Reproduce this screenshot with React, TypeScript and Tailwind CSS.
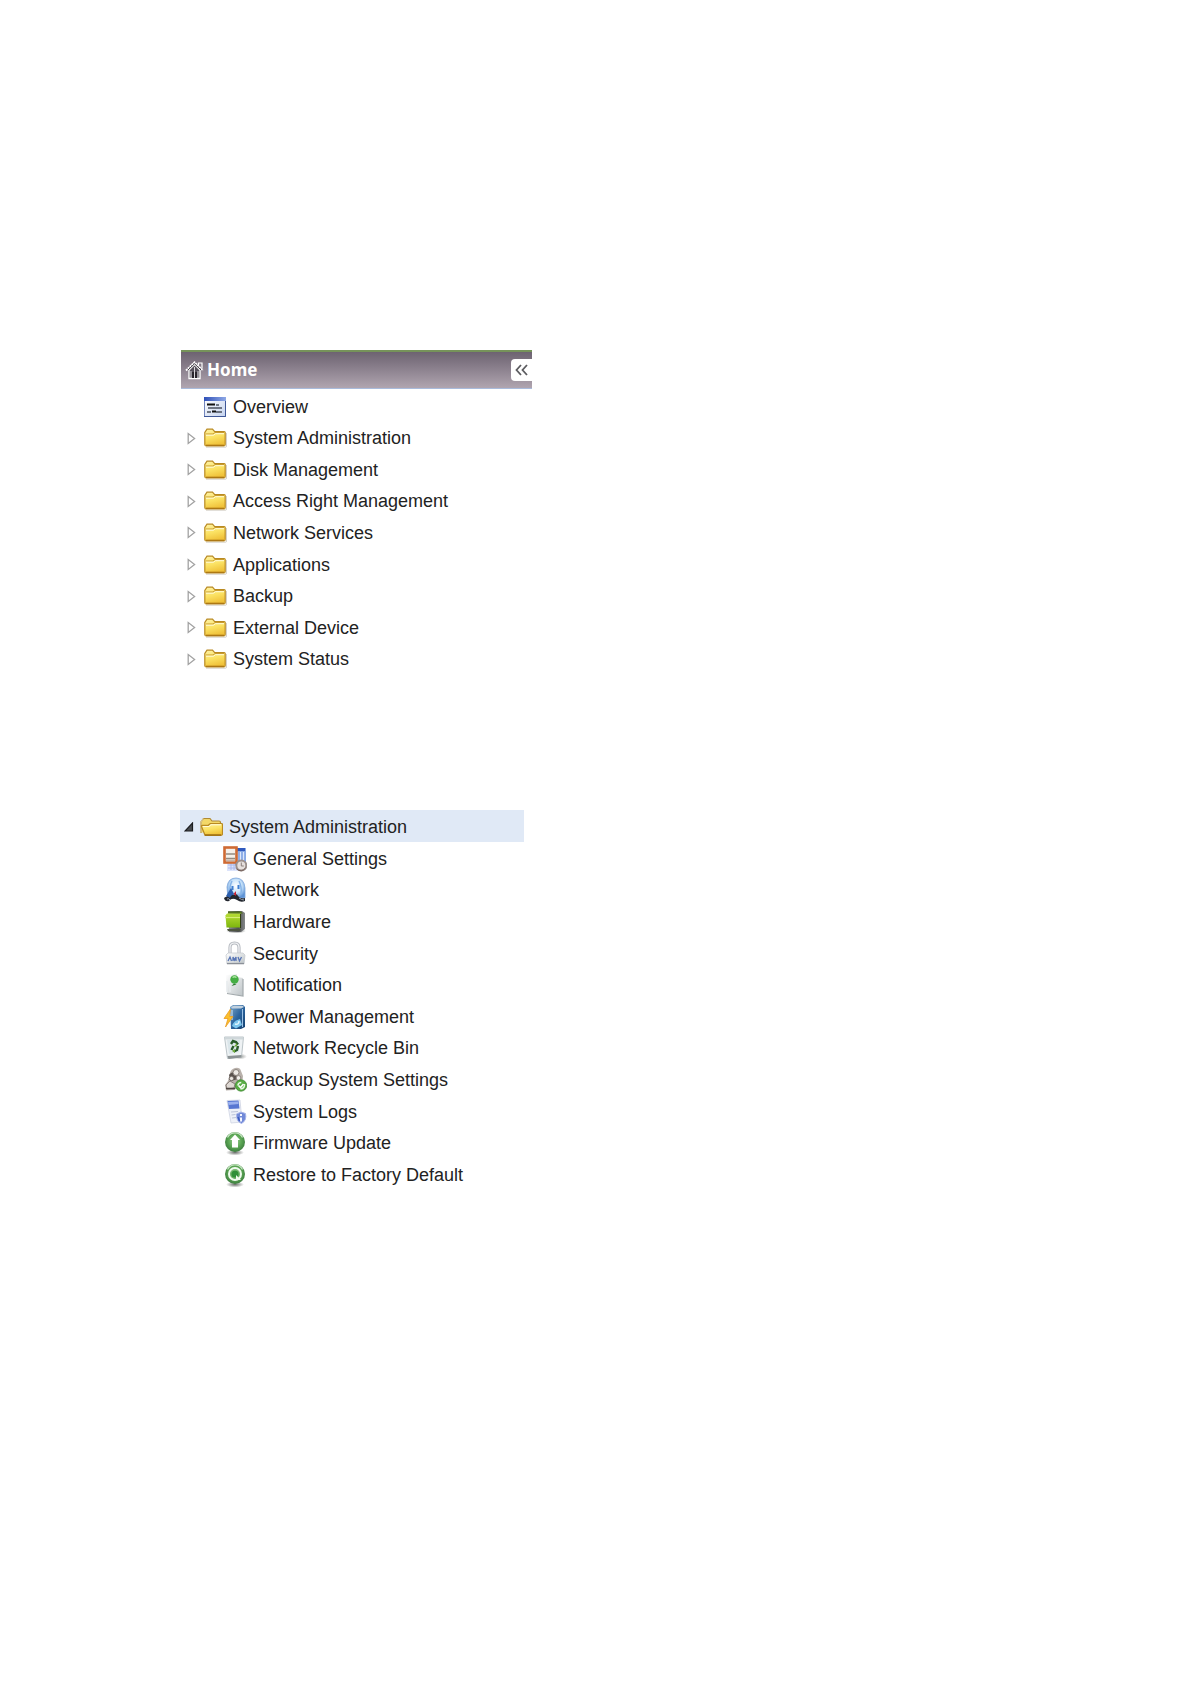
import type { ReactNode } from "react";

function Gradients() {
  return (
    <svg width="0" height="0" className="absolute" aria-hidden="true">
      <defs>
        <linearGradient id="folder" x1="0" y1="0" x2="0.3" y2="1">
          <stop offset="0" stopColor="#fff3a6" />
          <stop offset="0.55" stopColor="#fbe263" />
          <stop offset="1" stopColor="#f0c23a" />
        </linearGradient>
        <linearGradient id="titlebar" x1="0" y1="0" x2="1" y2="0">
          <stop offset="0" stopColor="#2f50b8" />
          <stop offset="1" stopColor="#8fa9e6" />
        </linearGradient>
        <linearGradient id="paper" x1="0" y1="0" x2="1" y2="1">
          <stop offset="0" stopColor="#ffffff" />
          <stop offset="1" stopColor="#bcc3c6" />
        </linearGradient>
        <linearGradient id="sheet" x1="0" y1="0" x2="1" y2="1">
          <stop offset="0" stopColor="#ffffff" />
          <stop offset="1" stopColor="#c5d3ee" />
        </linearGradient>
        <linearGradient id="lime" x1="0" y1="0" x2="0" y2="1">
          <stop offset="0" stopColor="#b7dd35" />
          <stop offset="1" stopColor="#7db50e" />
        </linearGradient>
        <linearGradient id="steel" x1="0" y1="0" x2="1" y2="0">
          <stop offset="0" stopColor="#8e9194" />
          <stop offset="0.6" stopColor="#4d5052" />
          <stop offset="1" stopColor="#85888a" />
        </linearGradient>
        <linearGradient id="tower" x1="0" y1="0" x2="1" y2="1">
          <stop offset="0" stopColor="#7ea6c8" />
          <stop offset="0.5" stopColor="#2c659f" />
          <stop offset="1" stopColor="#14406f" />
        </linearGradient>
        <radialGradient id="globe" cx="0.5" cy="0.4" r="0.6">
          <stop offset="0" stopColor="#ffffff" />
          <stop offset="0.55" stopColor="#c8e3fa" />
          <stop offset="1" stopColor="#5d93d6" />
        </radialGradient>
        <radialGradient id="ball" cx="0.5" cy="0.45" r="0.55">
          <stop offset="0" stopColor="#9fd294" />
          <stop offset="0.6" stopColor="#5aa553" />
          <stop offset="1" stopColor="#3d7d3f" />
        </radialGradient>
        <radialGradient id="shade">
          <stop offset="0" stopColor="#3a3f3a" stopOpacity="0.75" />
          <stop offset="1" stopColor="#3a3f3a" stopOpacity="0" />
        </radialGradient>
      </defs>
    </svg>
  );
}

function HouseIcon() {
  return (
    <svg width="19" height="19" viewBox="0 0 19 19" aria-hidden="true">
      <path d="M4 9v8.5h11V9L9.500 3.500z" fill="#55505a" stroke="#fff" strokeWidth="1.300" />
      <path d="M1 9.500 9.500 1.300 18 9.500" fill="none" stroke="#fff" strokeWidth="1.800" strokeDasharray="2 .6" />
      <path d="M13.500 4V2H17v5.500" fill="none" stroke="#fff" strokeWidth="1.200" />
      <path d="M3 9 9.500 2.800 16 9" fill="none" stroke="#39353d" strokeWidth="1" />
      <path d="M7 17V11h5v6z" fill="#28252b" />
      <path d="M9.500 6v11M6 10v7M13 10v7" stroke="#d8d5da" strokeWidth="1" />
    </svg>
  );
}

function OverviewIcon() {
  return (
    <svg width="22" height="20" viewBox="0 0 22 20" aria-hidden="true">
      <rect x="0.500" y="0.500" width="21" height="19" fill="url(#sheet)" stroke="#7286bd" />
      <rect x="0" y="0" width="22" height="4" fill="url(#titlebar)" />
      <path d="M21.500 4v15.500H0" fill="none" stroke="#3f5797" />
      <path d="M3 7.500h8M8 14.500h4" stroke="#111" strokeWidth="2" />
      <path d="M12 8h3M4 11h5M9 11h9M3 15h4M12 15h6" stroke="#4a505e" strokeWidth="1.300" />
    </svg>
  );
}

function FolderIcon() {
  return (
    <svg width="23" height="20" viewBox="0 0 23 20" aria-hidden="true">
      <path d="M2 19.200h19.500q1 0 1-1V5" fill="none" stroke="#b9b2a4" strokeOpacity="0.6" />
      <path d="M.8 16.500V4.500L3 1.200h5.500l2 2.300h9.700q1 0 1 1v12q0 1.500-1.500 1.500H2.300Q.8 18 .8 16.500z" fill="url(#folder)" stroke="#b98a22" strokeWidth="1.200" />
      <path d="M2 6h7l2-1.500h9" fill="none" stroke="#c99b2d" strokeWidth="1" />
      <path d="M2 7.200h7.500l2-1.500H20" fill="none" stroke="#fffbd8" strokeWidth="1" />
      <path d="M2 17.300h18" stroke="#a97312" strokeWidth="1.200" />
    </svg>
  );
}

function OpenFolderIcon() {
  return (
    <svg width="23" height="20" viewBox="0 0 23 20" aria-hidden="true">
      <path d="M1 16V5l2.500-3.500H10l2 2.500h7q1.500 0 1.500 1.500V9" fill="#f3d868" stroke="#b08a34" strokeWidth="1.200" />
      <path d="M1 15.500V5l2.500-3.500" fill="none" stroke="#dcc98f" strokeWidth="1.200" />
      <path d="M5 18.300 1.500 9.500q-.4-1.200 1-1.200h5.800l2-1.800h11.200q1 0 1 1v9.300q0 1.500-1.500 1.500z" fill="url(#folder)" stroke="#b98a22" strokeWidth="1.200" />
      <path d="M3 9.500h6l2-1.700h10" fill="none" stroke="#fffbd8" strokeWidth="1" />
      <path d="M5 18h16" stroke="#9b6c12" strokeWidth="1.400" />
    </svg>
  );
}

function ClosedArrow() {
  return (
    <svg width="9" height="13" viewBox="0 0 9 13" aria-hidden="true">
      <path d="M1.200 1.500v10L7.600 6.500z" fill="#fff" stroke="#a3a3a3" strokeWidth="1.300" />
    </svg>
  );
}

function OpenArrow() {
  return (
    <svg width="10" height="10" viewBox="0 0 10 10" aria-hidden="true">
      <path d="M8.500 1v8H1z" fill="#4a4c50" stroke="#1b1c1f" strokeWidth="1.200" />
    </svg>
  );
}

function ItemSvg({ children }: { children: ReactNode }) {
  return (
    <svg width="24" height="26" viewBox="0 0 24 26" className="shrink-0" aria-hidden="true">
      {children}
    </svg>
  );
}

const generalIcon = (
  <ItemSvg>
    <path d="M4 17h13v8H4z" fill="#dce4fb" />
    <path d="M5 19h9M5 22h9M8 17v7M11 17v7" stroke="#aab8ec" />
    <rect x="12" y="2" width="11" height="17" fill="#87a9e6" />
    <path d="M13 3.500h9" stroke="#3059bd" strokeWidth="3" />
    <path d="M14.500 6v11M17.500 6v11M20.500 6v11" stroke="#dbe7fb" strokeWidth="1.200" />
    <rect x="1.500" y="1.500" width="12" height="15" fill="#f5f0ea" stroke="#cf6a33" strokeWidth="2.600" />
    <path d="M3 8h9M3 12.500h9" stroke="#948a80" strokeWidth="1.400" />
    <path d="M3 14.500h9" stroke="#c9b5a8" strokeWidth="2" />
    <circle cx="18.300" cy="19.500" r="5" fill="#e6e0dd" stroke="#9a8f8c" strokeWidth="2" />
    <path d="M18.300 16.500v3.500h2.500" fill="none" stroke="#8b7f7c" />
    <path d="M13.500 23q5 4 9-1" fill="none" stroke="#75605a" strokeWidth="1" />
  </ItemSvg>
);

const networkIcon = (
  <ItemSvg>
    <path d="M4 10Q5 1 13 1t9 10v10H5z" fill="url(#globe)" stroke="#7fa7dc" strokeWidth="0.800" />
    <path d="M9 4q-3 6-2 13M16 4q3 6 2 13" stroke="#86b4e8" fill="none" strokeWidth="1.500" />
    <path d="M9.500 9v4M15.500 8v4" stroke="#3f7fd1" strokeWidth="2" />
    <path d="M3 19 8 11l3 6-4 5z" fill="#2c5fae" />
    <path d="M1 21q3-3 6 0 1.500-4 5-3 2-2 3 1 2 3 7 2v3q-4 2-8-1-5-3-8 1-4 1-5-3z" fill="#23272f" />
    <path d="M4 22q2-1 3 1M16 21q3 2 5 2" stroke="#9aa4b1" fill="none" />
    <path d="m10.500 17 2.500-3v5z" fill="#c9202f" />
  </ItemSvg>
);

const hardwareIcon = (
  <ItemSvg>
    <ellipse cx="13" cy="22" rx="10" ry="2.500" fill="url(#shade)" />
    <path d="M5 2h14l3 2v16l-4 3H6z" fill="url(#steel)" />
    <path d="M5 2.500h13l2 2H5z" fill="#54741d" />
    <path d="M2.500 6.500 4 4.500h13.500v14H3.500z" fill="url(#lime)" />
    <path d="M2 8.500h15.500" stroke="#d7ee76" strokeWidth="1.200" />
    <path d="M17.500 5v14" stroke="#314010" />
    <path d="M4 20h14l-1 2H5z" fill="#4d5441" />
  </ItemSvg>
);

const securityIcon = (
  <ItemSvg>
    <path d="M7 15V6.500Q7 2 11.500 2T16 6.500V15" fill="none" stroke="#b6bac0" strokeWidth="3.200" />
    <path d="M7 14V6.500Q7 2 11.500 2T16 6.500V14" fill="none" stroke="#f5f6f8" strokeWidth="1.200" />
    <path d="m3 14 2-2h15l2 2-1 9H4z" fill="url(#paper)" stroke="#c2c6cc" strokeWidth="0.700" />
    <path d="m5 20 2-4 1.500 4M10 20v-4l1.500 3 1.500-3v4M15 16l1.500 4 2-4" fill="none" stroke="#5875b5" strokeWidth="1.300" />
    <path d="M4 22.500h17" stroke="#8b9098" strokeWidth="1.200" />
  </ItemSvg>
);

const notificationIcon = (
  <ItemSvg>
    <path d="m3 3 11-1v3l6 1v18L4 21z" fill="url(#paper)" />
    <path d="M4 21.500 20 24V7" fill="none" stroke="#a2a9ac" strokeWidth="1.200" />
    <path d="M4 9v11M7 13v7" stroke="#e8ecee" strokeWidth="1.500" />
    <circle cx="11.500" cy="7.500" r="4.200" fill="#45ae43" />
    <path d="M11 11.500 8.500 14l5-1.500z" fill="#2d7b32" />
    <path d="M9.500 5.500q2-1.500 4 0" fill="none" stroke="#a9e49f" strokeWidth="1.500" />
  </ItemSvg>
);

const powerIcon = (
  <ItemSvg>
    <path d="m7 3 3-2h10l2 2v20l-4 2H8z" fill="url(#tower)" />
    <path d="m8 3 3-1.300h8.500L21 3l-3 1.500H9z" fill="#c0d0de" />
    <path d="M19.500 5v18" stroke="#9cc2e6" />
    <path d="M9 6v10" stroke="#a8c8e3" strokeWidth="1.500" />
    <path d="M9 22q1-5 8-7l2 6-6 3.500z" fill="#7cc6ed" />
    <path d="M12 20q4 1 4-3" fill="none" stroke="#e2f6ff" strokeWidth="1.500" />
    <path d="M7.500 5 1 14.500h4L2.500 23 10 12.500H6.500z" fill="#fbc02c" stroke="#e99a22" strokeWidth="0.800" />
  </ItemSvg>
);

const recycleIcon = (
  <ItemSvg>
    <ellipse cx="17" cy="21.500" rx="7" ry="3" fill="url(#shade)" opacity="0.7" />
    <path d="M1.500 2h19l-2 20-14 1.500z" fill="#eef2f4" stroke="#bcc5c9" strokeWidth="1" />
    <path d="M1.500 2h19l-.5 2.500H2z" fill="#cfd7da" />
    <path d="M4 5h13l-1 12-10 2z" fill="#dbe6ea" />
    <path d="m4.500 21 14-1v2.500l-13 1.500z" fill="#8b9294" />
    <path d="m8 9 2-3 3 1 2 2.500M15 11l-1 4-3 1.500M8.500 15l2-4" fill="none" stroke="#285b2a" strokeWidth="2.400" />
    <path d="M14 8v3.500h-3zM12 14v4l-3-2z" fill="#6ba936" />
  </ItemSvg>
);

const backupIcon = (
  <ItemSvg>
    <path d="M7 6q1-4 5-5 5-1 6 3l2 5-1 9-8 5-8 .500L2 18l3-4z" fill="#b9b1ab" />
    <path d="M6 8q2-3 6-3l3 7-7 2z" fill="#5a524e" />
    <circle cx="13" cy="5.500" r="3" fill="#eeeae6" stroke="#8b837d" />
    <circle cx="8.500" cy="11.500" r="2.200" fill="#e9e4df" stroke="#6f6762" />
    <circle cx="15.500" cy="11" r="2.400" fill="#f3f0ed" stroke="#8b837d" />
    <path d="m3 18 4-4 5 3-1 4-7 1z" fill="#ded8d3" stroke="#79706b" strokeWidth="0.800" />
    <path d="M3 21.500h9" stroke="#4d4642" strokeWidth="1.500" />
    <circle cx="18" cy="18.500" r="5.700" fill="#57ad43" stroke="#3c8431" strokeWidth="0.700" />
    <path d="M14.800 18.500q.5-3 3.500-3M21.500 17q.5 4.500-4 5" fill="none" stroke="#e9f9e4" strokeWidth="1.500" />
    <path d="m15.500 18.500 2 2 3-3.500" fill="none" stroke="#fff" strokeWidth="1.600" />
  </ItemSvg>
);

const logsIcon = (
  <ItemSvg>
    <path d="m4 1.500 13-.5 2 22-11 1z" fill="#eef1f8" stroke="#cfd4e3" strokeWidth="0.800" />
    <path d="m4.500 2 11-.500 1 8-10.500.500z" fill="#5877d2" />
    <path d="m5 3 10-.500.500 2.500L5.500 6z" fill="#9bb1ee" />
    <path d="m8 13 7-.500M8.500 16l4-.5M9 19l4-.5" stroke="#bcc4d8" strokeWidth="1.200" />
    <path d="M13.500 15 18 13l4.500 1.500q1.500 7-4 10-5.500-2-5-9.500z" fill="#7189d8" stroke="#a8b5e8" strokeWidth="1" />
    <path d="M18 15v2M18 18.500v4" stroke="#f4f6ff" strokeWidth="2" />
    <path d="m15 18 1.500 4" stroke="#395ac0" strokeWidth="1.500" />
  </ItemSvg>
);

const firmwareIcon = (
  <ItemSvg>
    <ellipse cx="12" cy="22.500" rx="9" ry="3" fill="url(#shade)" />
    <circle cx="12" cy="12" r="10" fill="url(#ball)" />
    <path d="M4.500 7.500Q7 2.800 12 2.800t7.500 4.700" fill="none" stroke="#c7e6c2" strokeWidth="1.300" />
    <path d="m12 4.500 5 5.500h-2v7.500H9V10H7z" fill="#fff" />
  </ItemSvg>
);

const restoreIcon = (
  <ItemSvg>
    <ellipse cx="12" cy="22.500" rx="9" ry="3" fill="url(#shade)" />
    <circle cx="12" cy="12" r="10" fill="url(#ball)" />
    <path d="M4.500 7.500Q7 2.800 12 2.800t7.500 4.700" fill="none" stroke="#c7e6c2" strokeWidth="1.300" />
    <circle cx="12" cy="12" r="6" fill="none" stroke="#f0faee" strokeWidth="2" />
    <circle cx="12" cy="12" r="3.600" fill="#2f8f37" />
    <path d="m13 13 5 5h-5z" fill="#f0faee" />
  </ItemSvg>
);

const folders = [
  "System Administration",
  "Disk Management",
  "Access Right Management",
  "Network Services",
  "Applications",
  "Backup",
  "External Device",
  "System Status",
];

const items = [
  { label: "General Settings", icon: generalIcon },
  { label: "Network", icon: networkIcon },
  { label: "Hardware", icon: hardwareIcon },
  { label: "Security", icon: securityIcon },
  { label: "Notification", icon: notificationIcon },
  { label: "Power Management", icon: powerIcon },
  { label: "Network Recycle Bin", icon: recycleIcon },
  { label: "Backup System Settings", icon: backupIcon },
  { label: "System Logs", icon: logsIcon },
  { label: "Firmware Update", icon: firmwareIcon },
  { label: "Restore to Factory Default", icon: restoreIcon },
];

function HomePanel() {
  return (
    <nav aria-label="Home" className="w-full max-w-[351px]">
      <header className="flex h-[39px] items-center justify-between border-t-2 border-b border-t-[#76935a] border-b-[#a9bbdc] bg-linear-to-b from-[#6d6371] to-[#b0a5b0] pl-1">
        <h1 className="flex items-center gap-[3px] font-['Noto_Sans','Open_Sans',sans-serif] text-[17px] leading-6 font-bold text-white">
          <HouseIcon />
          Home
        </h1>
        <button type="button" aria-label="Collapse menu" className="flex h-[22px] w-[21px] items-center justify-center rounded-l-[4px] bg-white">
          <svg width="13" height="12" viewBox="0 0 13 12" aria-hidden="true">
            <path d="M6 1 1.500 6 6 11M12 1 7.500 6 12 11" fill="none" stroke="#5c5c60" strokeWidth="1.800" />
          </svg>
        </button>
      </header>
      <ul className="mt-[2px] grid min-h-[284px] auto-rows-fr">
        <li className="flex">
          <a href="#overview" className="flex w-full items-center pl-[23px]">
            <OverviewIcon />
            <span className="pl-[7px]">Overview</span>
          </a>
        </li>
        {folders.map((label) => (
          <li key={label} className="flex">
            <button type="button" aria-expanded="false" className="flex w-full items-center pl-[6px]">
              <ClosedArrow />
              <span className="pl-2">
                <FolderIcon />
              </span>
              <span className="pl-[6px]">{label}</span>
            </button>
          </li>
        ))}
      </ul>
    </nav>
  );
}

function AdministrationPanel() {
  return (
    <nav aria-label="System Administration" className="-ml-px grid min-h-[379px] w-full max-w-[344px] auto-rows-fr">
      <button type="button" aria-expanded="true" className="flex items-center bg-[#e0e9f6] pt-[3px] pl-1">
        <OpenArrow />
        <span className="pl-[6px]">
          <OpenFolderIcon />
        </span>
        <span className="pl-[6px]">System Administration</span>
      </button>
      {items.map(({ label, icon }) => (
        <a key={label} href="#settings" className="flex items-center gap-[6px] pt-[3px] pl-[43px]">
          {icon}
          {label}
        </a>
      ))}
    </nav>
  );
}

export default function App() {
  return (
    <main className="flex min-h-screen flex-col gap-[135px] bg-white px-[181px] pt-[350px] pb-16 font-['Liberation_Sans',Arial,sans-serif] text-[18px] leading-6 text-[#222]">
      <Gradients />
      <HomePanel />
      <AdministrationPanel />
    </main>
  );
}
